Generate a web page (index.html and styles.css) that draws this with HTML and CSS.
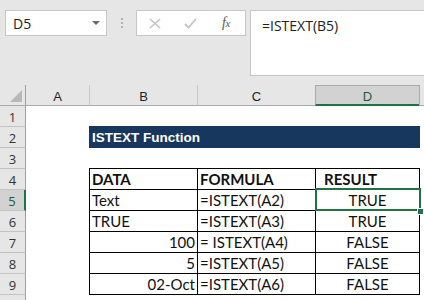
FILE: index.html
```html
<!DOCTYPE html>
<html>
<head>
<meta charset="utf-8">
<link rel="stylesheet" href="styles.css">
</head>
<body>
<div class="app">
  <div class="toolbar">
    <div class="namebox"><span class="name">D5</span><span class="dd"></span></div>
    <div class="grip"><i></i><i></i><i></i></div>
    <div class="fbtns">
      <svg class="ico-x" width="12" height="11" viewBox="0 0 12 11"><path d="M1 1 L11 10 M11 1 L1 10" stroke="#c4c4c4" stroke-width="1.6" fill="none"/></svg>
      <svg class="ico-ok" width="13" height="11" viewBox="0 0 13 11"><path d="M1 6 L4.5 9.5 L12 1" stroke="#c4c4c4" stroke-width="1.8" fill="none"/></svg>
      <span class="fx">f<span class="fxx">x</span></span>
    </div>
    <div class="formula">=ISTEXT(B5)</div>
  </div>

  <div class="sheet">
    <div class="corner"><svg width="14" height="14" viewBox="0 0 14 14"><polygon points="13,1 13,13 1,13" fill="#b9b9b9"/></svg></div>
    <div class="colh">A</div>
    <div class="colh sep">B</div>
    <div class="colh sep">C</div>
    <div class="colh sep sel">D</div>
    <div class="colh sep"></div>

    <div class="rowh" style="grid-row:2">1</div>
    <div class="rowh" style="grid-row:3">2</div>
    <div class="rowh" style="grid-row:4">3</div>
    <div class="rowh" style="grid-row:5">4</div>
    <div class="rowh rsel" style="grid-row:6">5</div>
    <div class="rowh" style="grid-row:7">6</div>
    <div class="rowh" style="grid-row:8">7</div>
    <div class="rowh" style="grid-row:9">8</div>
    <div class="rowh" style="grid-row:10">9</div>
    <div class="rowh" style="grid-row:11"></div>

    <div class="title">ISTEXT Function</div>

    <div class="table">
      <div class="c b">DATA</div>
      <div class="c b">FORMULA</div>
      <div class="c b ind">RESULT</div>

      <div class="c">Text</div>
      <div class="c">=ISTEXT(A2)</div>
      <div class="c ctr active">TRUE</div>

      <div class="c">TRUE</div>
      <div class="c">=ISTEXT(A3)</div>
      <div class="c ctr">TRUE</div>

      <div class="c r">100</div>
      <div class="c">= ISTEXT(A4)</div>
      <div class="c ctr">FALSE</div>

      <div class="c r">5</div>
      <div class="c">=ISTEXT(A5)</div>
      <div class="c ctr">FALSE</div>

      <div class="c r">02-Oct</div>
      <div class="c">=ISTEXT(A6)</div>
      <div class="c ctr">FALSE</div>
    </div>
  </div>
</div>
</body>
</html>
```

FILE: styles.css
```css
html, body {
  margin: 0;
  padding: 0;
  background: #ffffff;
  overflow: hidden;
}

.app {
  width: 424px;
  height: 300px;
  overflow: hidden;
}

.toolbar {
  height: 85px;
  background: #e6e6e6;
  display: flex;
  align-items: flex-start;
  padding: 10px 0 0 5px;
  box-sizing: border-box;
}

.namebox {
  width: 102px;
  height: 26px;
  box-sizing: border-box;
  border: 1px solid #c6c6c6;
  background: #fff;
  display: flex;
  align-items: center;
  justify-content: space-between;
  padding: 0 6px 0 7px;
}

.name {
  font-family: "Open Sans", "Noto Sans", sans-serif;
  font-size: 14px;
  color: #222;
}

.dd {
  width: 0;
  height: 0;
  border-left: 4px solid transparent;
  border-right: 4px solid transparent;
  border-top: 4px solid #6a6a6a;
}

.grip {
  margin-left: 14px;
  height: 26px;
  display: flex;
  flex-direction: column;
  justify-content: center;
  gap: 2px;
}

.grip i {
  display: block;
  width: 2px;
  height: 2px;
  background: #b4b4b4;
}

.fbtns {
  margin-left: 13px;
  width: 110px;
  height: 26px;
  box-sizing: border-box;
  border: 1px solid #c6c6c6;
  background: #fff;
  display: flex;
  align-items: center;
  padding-left: 12px;
}

.ico-ok {
  margin-left: 23px;
}

.fx {
  margin-left: 25px;
  font-family: "Liberation Serif", "DejaVu Serif", serif;
  font-style: italic;
  font-size: 14px;
  color: #5a5a5a;
  letter-spacing: -0.5px;
}

.fxx {
  font-size: 11px;
}

.formula {
  margin-left: 4px;
  flex: 1;
  height: 66px;
  box-sizing: border-box;
  border: 1px solid #c6c6c6;
  border-right: none;
  background: #fff;
  padding: 5px 0 0 11px;
  font-family: "Open Sans", "Noto Sans", sans-serif;
  font-size: 14px;
  line-height: 20px;
  color: #222;
}

.sheet {
  display: grid;
  grid-template-columns: 26px 63px 108px 118px 104px 1fr;
  grid-template-rows: 21px repeat(10, 21px);
  background: #fff;
}

.corner {
  background: #e6e6e6;
  border-right: 1px solid #9e9e9e;
  border-bottom: 1px solid #ababab;
  box-sizing: border-box;
  display: flex;
  align-items: flex-end;
  justify-content: flex-end;
  padding: 0 2px 2px 0;
}

.colh {
  background: #e6e6e6;
  border-bottom: 1px solid #ababab;
  box-sizing: border-box;
  display: flex;
  align-items: center;
  justify-content: center;
  padding-top: 2px;
  font-family: "Liberation Sans", Arial, sans-serif;
  font-size: 13px;
  color: #222;
}

.colh.sep {
  border-left: 1px solid #c8c8c8;
}

.colh.sel {
  background: #d2d2d2;
  border-left: 1px solid #ababab;
  border-top: 1px solid #ababab;
  border-bottom: 2px solid #217346;
  color: #1d5a3a;
}

.colh.sel + .colh {
  border-left-color: #ababab;
}

.rowh {
  grid-column: 1;
  background: #e6e6e6;
  border-right: 1px solid #9e9e9e;
  border-bottom: 1px solid #c2c2c2;
  box-sizing: border-box;
  display: flex;
  align-items: center;
  justify-content: center;
  padding-top: 1px;
  font-family: "Open Sans", "Noto Sans", sans-serif;
  font-size: 13px;
  color: #333;
}

.rowh.rsel {
  background: #d2d2d2;
  border-right: 2px solid #217346;
  color: #1d5a3a;
}

.title {
  grid-column: 3 / 6;
  grid-row: 3;
  margin: -1px -1px 0 0;
  background: #17375e;
  color: #fff;
  font-family: "Liberation Sans", Arial, sans-serif;
  font-weight: bold;
  font-size: 13.5px;
  display: flex;
  align-items: center;
  padding: 1px 0 0 3px;
}

.table {
  grid-column: 3 / 6;
  grid-row: 5 / 11;
  margin: -1px -1px 0 0;
  border-top: 1px solid #000;
  border-right: 1px solid #000;
  display: grid;
  grid-template-columns: 108px 118px 104px;
  grid-template-rows: repeat(6, 21px);
}

.c {
  position: relative;
  box-sizing: border-box;
  border-left: 1px solid #000;
  border-bottom: 1px solid #000;
  padding: 0 2px;
  font-family: Lato, "Open Sans", sans-serif;
  font-size: 15px;
  line-height: 20px;
  color: #111;
  white-space: nowrap;
}

.c.b {
  font-weight: bold;
}

.c.r {
  text-align: right;
}

.c.ctr {
  text-align: center;
}

.c.ind {
  padding-left: 8px;
}

.c.active::after {
  content: "";
  position: absolute;
  top: -2px;
  left: -1px;
  right: -2px;
  bottom: -1px;
  border: 2px solid #217346;
}

.c.active::before {
  content: "";
  position: absolute;
  right: -4px;
  bottom: -4px;
  width: 5px;
  height: 5px;
  background: #217346;
  outline: 1px solid #fff;
  z-index: 2;
}
```
